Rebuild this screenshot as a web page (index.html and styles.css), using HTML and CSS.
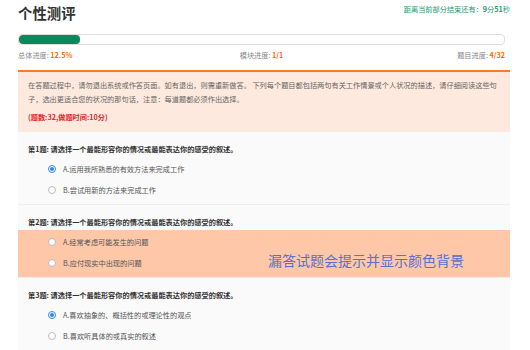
FILE: index.html
```html
<!DOCTYPE html>
<html lang="zh-CN">
<head>
  <meta charset="UTF-8">
  <title>个性测评</title>
  <link rel="stylesheet" href="styles.css">
</head>
<body>

  <div class="page">
    <div class="header">
      <h1>个性测评</h1>
      <div class="timer">距离当前部分结束还有：<b>9</b>分<b>51</b>秒</div>
    </div>

    <div class="progress">
      <div class="progress-fill" style="width: 12.5%"></div>
    </div>
    <div class="progress-labels">
      <span>总体进度: <b>12.5%</b></span>
      <span class="mid">模块进度: <b>1/1</b></span>
      <span class="right">题目进度: <b>4/32</b></span>
    </div>

    <div class="notice">
      <p>在答题过程中，请勿退出系统或作答页面。如有退出，则需重新做答。 下列每个题目都包括两句有关工作情景或个人状况的描述，请仔细阅读这些句子，选出更适合您的状况的那句话，注意：每道题都必须作出选择。</p>
      <p class="count">(题数:32,做题时间:10分)</p>
    </div>

    <div class="questions">
      <div class="question">
        <div class="q-title">第1题: 请选择一个最能形容你的情况或最能表达你的感受的叙述。</div>
        <div class="options">
          <label class="option"><span class="radio checked"></span>A.运用我所熟悉的有效方法来完成工作</label>
          <label class="option"><span class="radio"></span>B.尝试用新的方法来完成工作</label>
        </div>
      </div>

      <div class="question">
        <div class="q-title">第2题: 请选择一个最能形容你的情况或最能表达你的感受的叙述。</div>
        <div class="options missed">
          <label class="option"><span class="radio"></span>A.经常考虑可能发生的问题</label>
          <label class="option"><span class="radio"></span>B.应付现实中出现的问题</label>
          <div class="hint">漏答试题会提示并显示颜色背景</div>
        </div>
      </div>

      <div class="question">
        <div class="q-title">第3题: 请选择一个最能形容你的情况或最能表达你的感受的叙述。</div>
        <div class="options">
          <label class="option"><span class="radio checked"></span>A.喜欢抽象的、概括性的或理论性的观点</label>
          <label class="option"><span class="radio"></span>B.喜欢听具体的或真实的叙述</label>
        </div>
      </div>
    </div>
  </div>

</body>
</html>
```

FILE: styles.css
```css
body {
  margin: 0;
  background: #fff;
  font-family: "Noto Sans CJK SC", "Noto Sans", sans-serif;
  font-size: 7.2px;
  color: #555;
}

.page {
  width: 492px;
  margin-left: 18px;
}

.header {
  display: flex;
  justify-content: space-between;
  align-items: flex-start;
  height: 24px;
  padding-top: 3px;
}

h1 {
  margin: 0;
  font-size: 14.4px;
  line-height: 20px;
  font-weight: bold;
  color: #333;
}

.timer {
  margin-top: 1px;
  line-height: 10px;
  color: #1f9a6c;
}

.timer b {
  font-weight: bold;
}

.progress {
  margin-top: 7px;
  width: 485px;
  height: 9px;
  border: 1px solid #ddd;
  border-radius: 4px;
  background: #fff;
  overflow: hidden;
}

.progress-fill {
  height: 100%;
  background: #0a8a5c;
  border-radius: 4px;
}

.progress-labels {
  width: 487px;
  display: grid;
  grid-template-columns: 1fr auto 1fr;
  margin-top: 5px;
  line-height: 10px;
  color: #888;
}

.progress-labels b {
  color: #ff6a00;
  font-weight: bold;
}

.progress-labels .right {
  text-align: right;
}

.notice {
  margin-top: 10px;
  border-top: 2px solid #ff7a22;
  background: #fde9dd;
  padding: 6px 8px 8px 10px;
}

.notice p {
  margin: 0;
  line-height: 14px;
  color: #666;
}

.notice .count {
  margin-top: 4px;
  color: #e0262b;
  font-weight: bold;
}

.questions {
  background: #fafafa;
}

.question {
  padding-top: 11px;
  border-bottom: 1px solid #eee;
}

.q-title {
  padding-left: 10px;
  line-height: 12px;
  height: 12px;
  margin-bottom: 2px;
  font-weight: bold;
  color: #333;
}

.options {
  position: relative;
  padding: 1px 0 4px 30px;
}

.options.missed {
  background: #fdc7a8;
}

.option {
  display: flex;
  align-items: center;
  height: 21px;
  color: #555;
}

.radio {
  width: 6px;
  height: 6px;
  border: 1px solid #bbb;
  border-radius: 50%;
  background: #fff;
  margin-right: 7px;
  position: relative;
}

.radio.checked {
  border-color: #2f86f0;
}

.radio.checked::after {
  content: "";
  position: absolute;
  left: 1px;
  top: 1px;
  width: 4px;
  height: 4px;
  border-radius: 50%;
  background: #2f86f0;
}

.hint {
  position: absolute;
  left: 250px;
  top: 20px;
  font-size: 14px;
  line-height: 20px;
  color: #5a6fd6;
}
```
